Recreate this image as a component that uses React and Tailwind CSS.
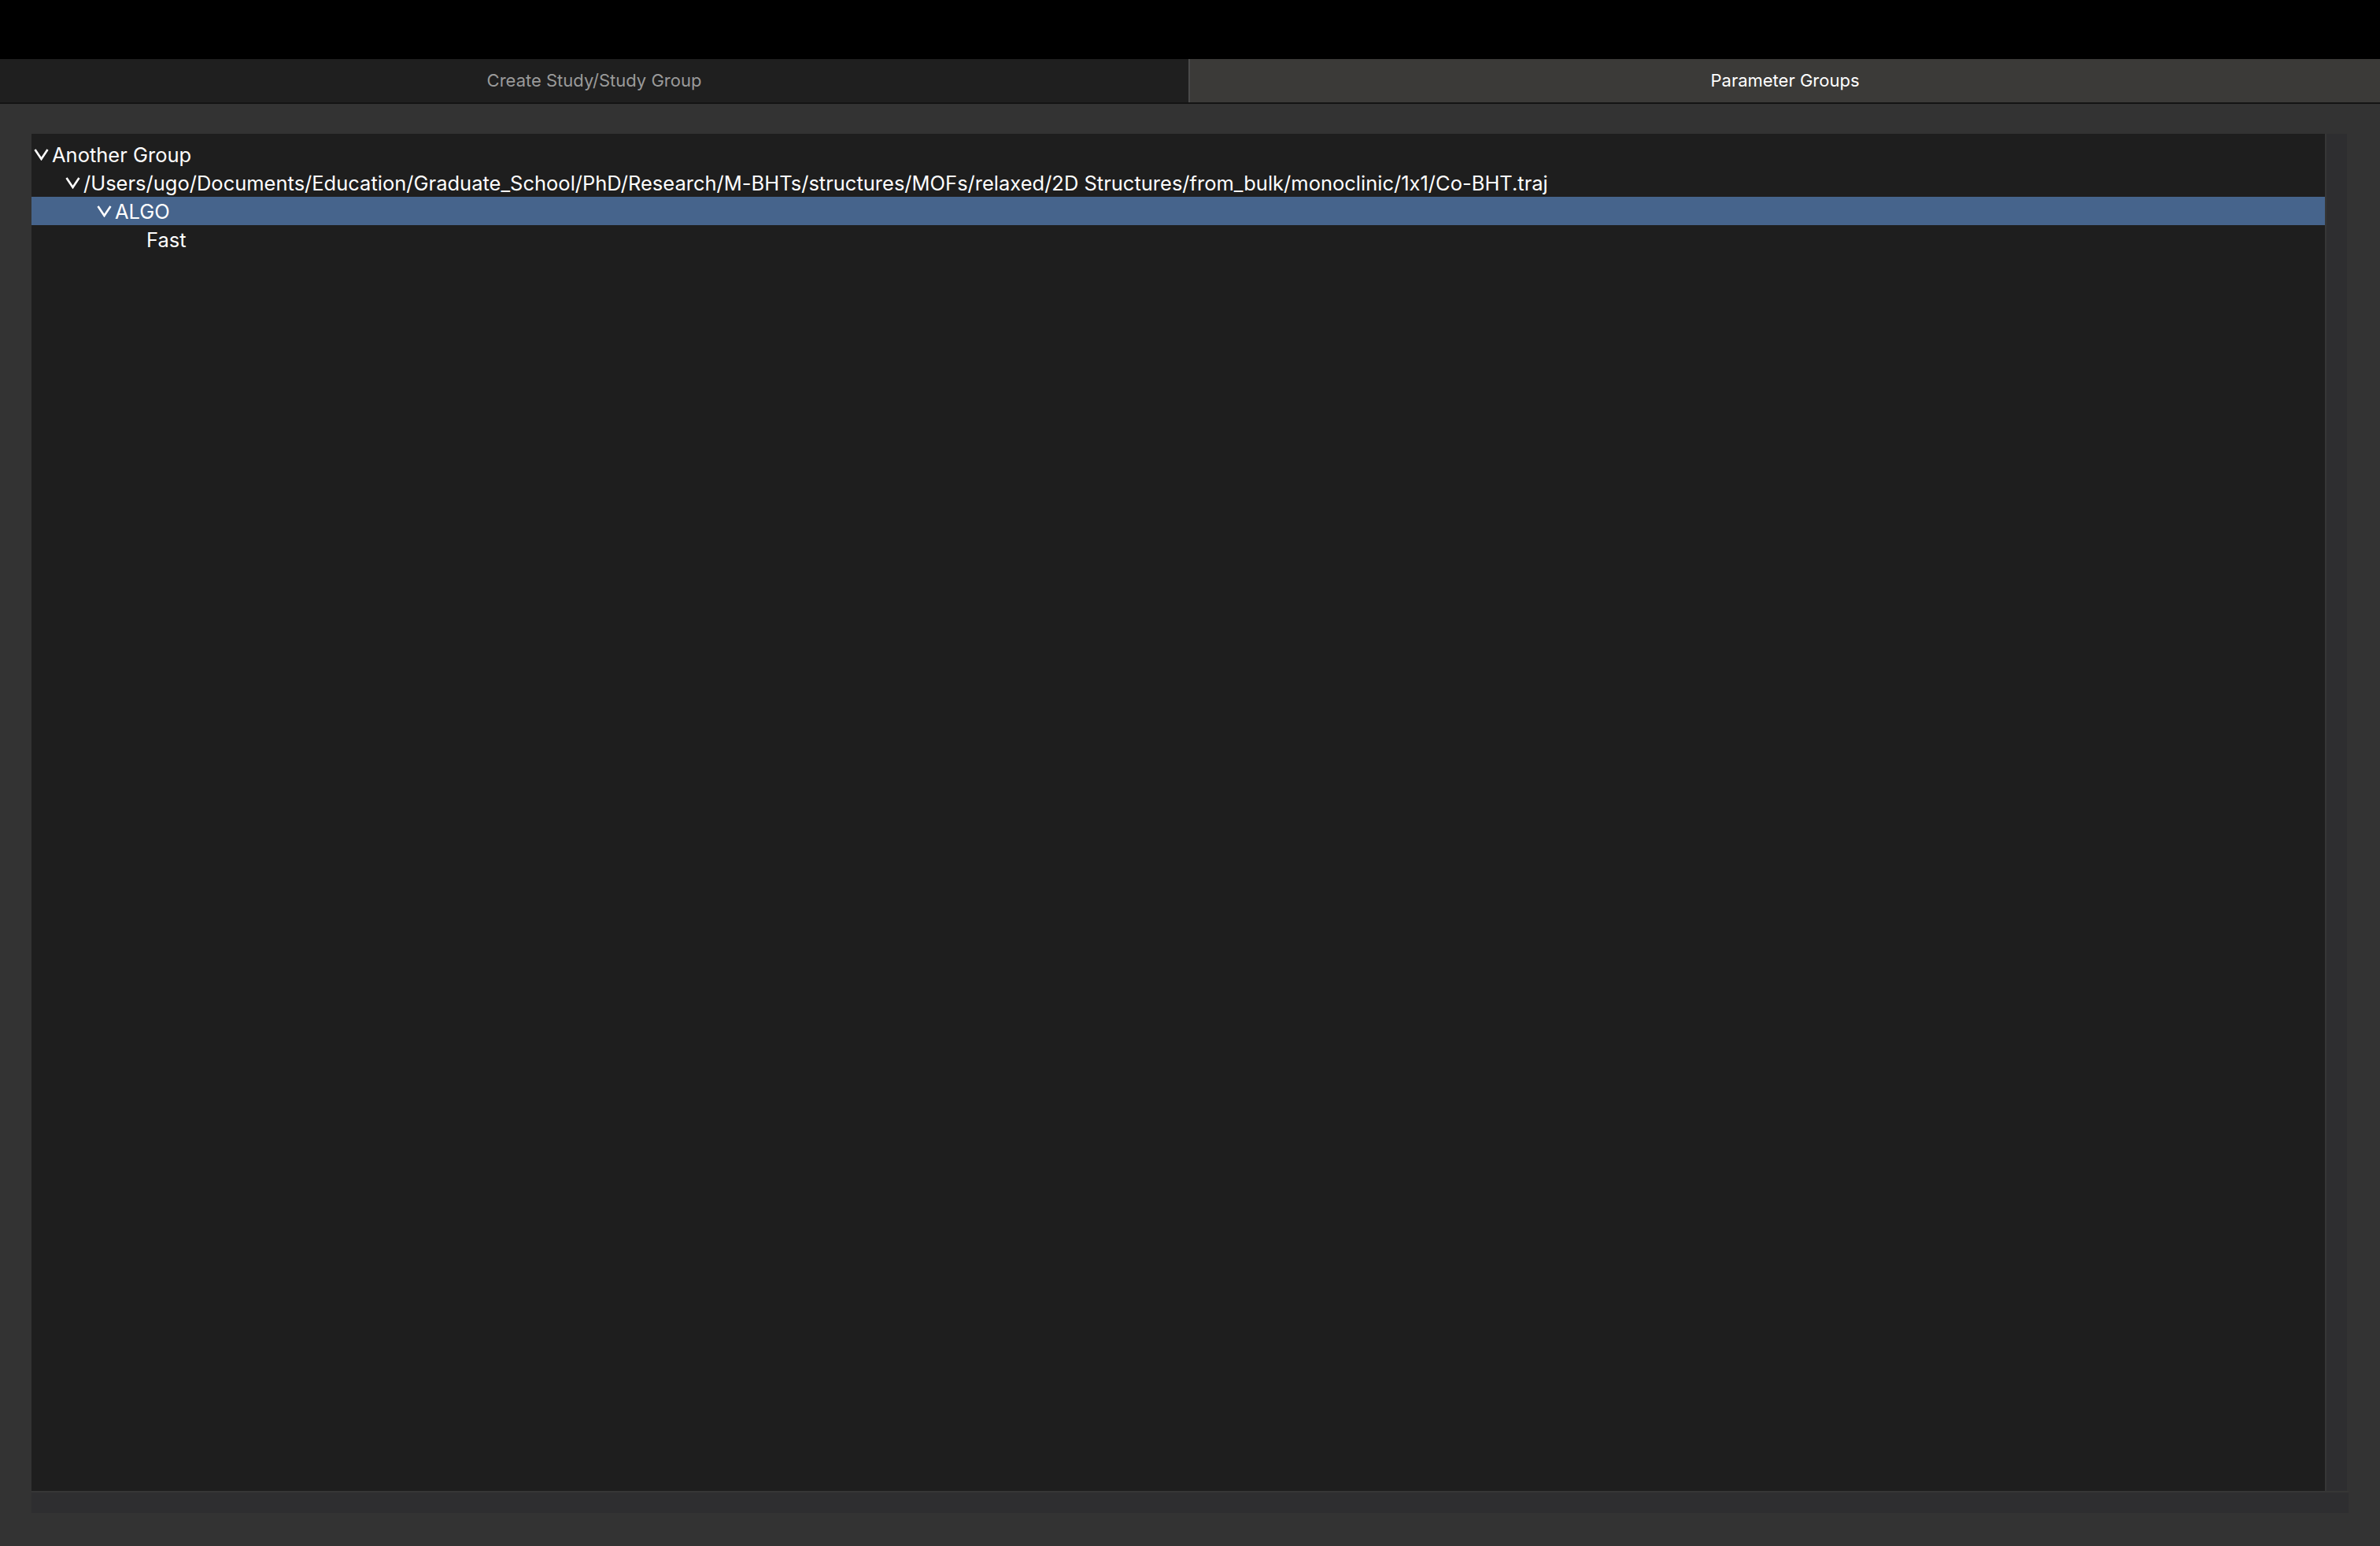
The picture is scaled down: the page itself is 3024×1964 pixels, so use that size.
const rows = [
  { label: 'Another Group', indent: 'pl-[3px]', arrow: true },
  {
    label: '/Users/ugo/Documents/Education/Graduate_School/PhD/Research/M-BHTs/structures/MOFs/relaxed/2D Structures/from_bulk/monoclinic/1x1/Co-BHT.traj',
    indent: 'pl-[43px]',
    arrow: true,
  },
  { label: 'ALGO', indent: 'pl-[83px]', arrow: true, selected: true },
  { label: 'Fast', indent: 'pl-[146px]' },
]

function Chevron() {
  return (
    <svg viewBox="0 0 19 15" className="h-[15px] w-[19px] shrink-0" fill="none" stroke="#ffffff" strokeWidth="2.6">
      <polyline points="1.5,1 9.5,13 17.5,1" />
    </svg>
  )
}

function Row({ row }) {
  return (
    <div className={`flex h-9 items-center whitespace-nowrap text-[25.5px] font-[425] text-white [font-feature-settings:'calt'_0] ${row.indent} ${row.selected ? 'bg-[#46648c]' : ''}`}>
      {row.arrow ? <Chevron /> : null}
      <span className={`pt-[2px] ${row.arrow ? 'ml-[4px]' : ''}`}>{row.label}</span>
    </div>
  )
}

export default function App() {
  return (
    <div className="flex h-[1964px] w-[3024px] flex-col overflow-hidden bg-[#333333] font-['Inter',sans-serif]">
      <div className="h-[75px] bg-black" />
      <div className="flex h-[57px] border-b-2 border-[#141414]">
        <div className="flex w-[1510px] items-center justify-center bg-[#1f1f1f] text-[22px] text-[#9a9a9a]">Create Study/Study Group</div>
        <div className="flex flex-1 items-center justify-center border-l-2 border-[#4a4a4a] bg-[#3b3a38] text-[22px] text-white">Parameter Groups</div>
      </div>
      <div className="mt-[38px] ml-[40px] w-[2944px]">
        <div className="flex w-[2942px]">
          <div className="h-[1724px] w-[2914px] bg-[#1e1e1e] pt-2">
            {rows.map((row) => <Row key={row.label} row={row} />)}
          </div>
          <div className="flex-1 border-l-2 border-[#363636] bg-[#2e2e30]" />
        </div>
        <div className="h-7 border-t-2 border-[#363636] bg-[#2e2e30]" />
      </div>
    </div>
  )
}
